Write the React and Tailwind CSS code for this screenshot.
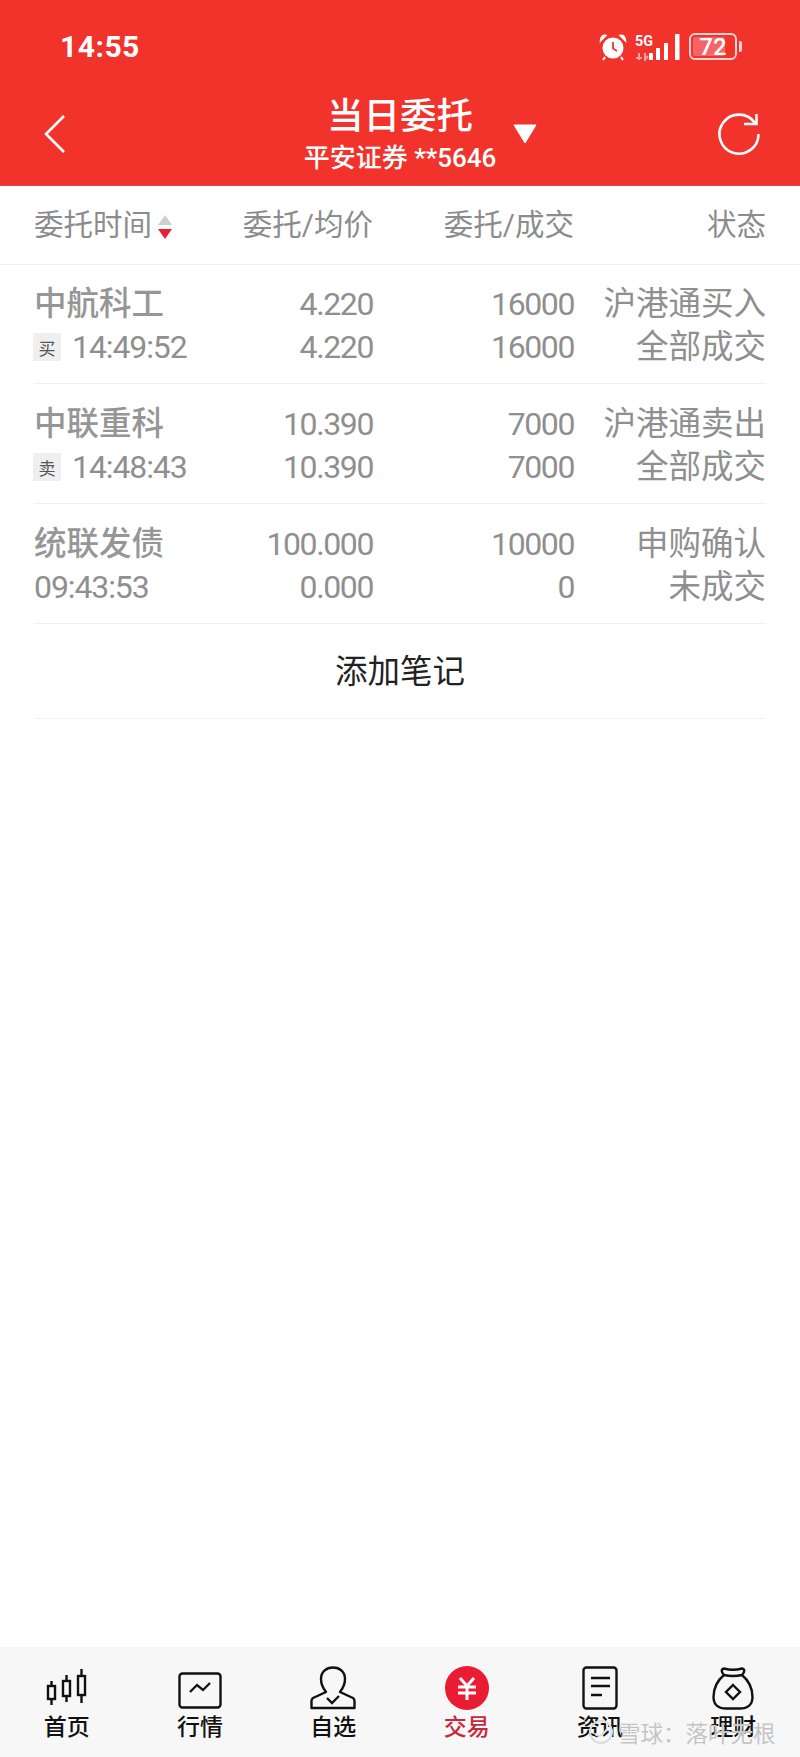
const cjk = { fontFamily: '"Noto Sans CJK SC", sans-serif' };
const num = { fontFamily: 'Roboto, "Noto Sans CJK SC", sans-serif' };

const orders = [
  { name: "中航科工", tag: "买", time: "14:49:52", p1: "4.220", p2: "4.220", q1: "16000", q2: "16000", s1: "沪港通买入", s2: "全部成交" },
  { name: "中联重科", tag: "卖", time: "14:48:43", p1: "10.390", p2: "10.390", q1: "7000", q2: "7000", s1: "沪港通卖出", s2: "全部成交" },
  { name: "统联发债", time: "09:43:53", p1: "100.000", p2: "0.000", q1: "10000", q2: "0", s1: "申购确认", s2: "未成交" },
];

function StatusIcons() {
  return (
    <div className="flex items-center gap-[9px] text-white">
      {/* alarm clock */}
      <svg width="28" height="28" viewBox="0 0 28 28" className="-mr-[1px]">
        <circle cx="14" cy="15" r="10.5" fill="#fff" />
        <path d="M1.5 8 L7 2.5 Q2 1.5 1.5 8Z M26.5 8 L21 2.5 Q26 1.5 26.5 8Z" fill="#fff" stroke="#fff" strokeWidth="1.5" />
        <path d="M14 9 V15.5 L18 18" fill="none" stroke="#f1332c" strokeWidth="1.8" />
        <path d="M6 24 L4 27 M22 24 L24 27" stroke="#fff" strokeWidth="2" />
      </svg>
      {/* mobile signal */}
      <svg width="45" height="28" viewBox="0 0 45 28">
        <text x="0" y="13" fill="#fff" fontSize="15" fontWeight="700" fontFamily="Roboto, sans-serif" textLength="18" lengthAdjust="spacingAndGlyphs">5G</text>
        <path d="M4 20 V27 M1 25 H7" stroke="#f7a09b" strokeWidth="2" />
        <path d="M10 20 V27 L13 23" fill="none" stroke="#f7a09b" strokeWidth="2" />
        <rect x="14" y="20" width="4" height="7" fill="#fff" />
        <rect x="21" y="15" width="4" height="12" fill="#fff" />
        <rect x="29" y="10" width="4" height="17" fill="#fff" />
        <rect x="40" y="1" width="4.500" height="26" fill="#fff" />
      </svg>
      {/* battery */}
      <div className="flex items-center gap-[2px]">
        <div className="relative w-[48px] h-[27px] rounded-[6px] border-2 border-[#fbd3d0] flex items-center justify-center">
          <div className="absolute left-[2px] top-[2px] bottom-[2px] w-[32px] rounded-[2px] bg-[#f4656a]" />
          <span className="relative text-[24px] leading-none font-medium text-white" style={num}>72</span>
        </div>
        <div className="w-[3px] h-[11px] rounded-r-[2px] bg-[#fbd3d0]" />
      </div>
    </div>
  );
}

function Header() {
  return (
    <header className="h-[186px] bg-[#f1332c] border-b border-[#d8474a] text-white flex flex-col shrink-0">
      <div className="h-[92px] pl-[60px] pr-[58px] flex items-center justify-between pt-[1px]">
        <span className="text-[30px] font-bold tracking-[0.5px] leading-none" style={num}>14:55</span>
        <StatusIcons />
      </div>
      <div className="relative flex-1 flex items-start justify-between pl-[43px] pr-[39px]">
        <svg width="24" height="40" viewBox="0 0 24 40" className="mt-[22px]">
          <path d="M21 2 L3 20 L21 38" fill="none" stroke="#fff" strokeWidth="2.600" />
        </svg>
        <div className="absolute left-0 right-0 top-0 flex flex-col items-center">
          <span className="text-[36.5px] leading-[44px] font-medium" style={cjk}>当日委托</span>
          <span className="text-[26px] leading-[30px] font-medium mt-[7px]" style={num}>平安证券 **5646</span>
        </div>
        <svg width="24" height="20" viewBox="0 0 24 20" className="absolute left-[513px] top-[32px]">
          <path d="M1 1 H23 L12 19Z" fill="#fff" stroke="#fff" strokeLinejoin="round" />
        </svg>
        <svg width="44" height="44" viewBox="0 0 44 44" className="mt-[20px]">
          <path d="M38 11 A19.500 19.500 0 1 0 41.500 22" fill="none" stroke="#fff" strokeWidth="2.600" />
          <path d="M27 12 H39.500 V2" fill="none" stroke="#fff" strokeWidth="2.600" />
        </svg>
      </div>
    </header>
  );
}

function SortArrows() {
  return (
    <svg width="16" height="26" viewBox="0 0 16 26" className="ml-[5px] mt-[1px]">
      <path d="M8 1 L15 11 H1Z" fill="#cfcfcf" />
      <path d="M1 15 H15 L8 25Z" fill="#e8202f" />
    </svg>
  );
}

function HeadRow() {
  return (
    <div className="h-[79px] border-b border-[#f1f1f1] pt-[2px] px-[34px] grid grid-cols-[200px_139px_201px_192px] items-center text-[29.5px] leading-none text-[#8c8c8c]" style={num}>
      <div className="flex items-center">委托时间<SortArrows /></div>
      <div className="text-right">委托/均价</div>
      <div className="text-right">委托/成交</div>
      <div className="text-right">状态</div>
    </div>
  );
}

function OrderRow({ o }) {
  const figures = "flex flex-col items-end text-[32px] tracking-[-1.4px] leading-none";
  return (
    <div className="mx-[34px] h-[120px] border-b border-[#f1f1f1] pt-[18px] grid grid-cols-[200px_139px_201px_192px] text-[#8f8f8f]" style={num}>
      <div className="flex flex-col">
        <div className="h-[44px] flex items-center text-[32.5px] leading-none font-medium text-[#969696]">{o.name}</div>
        <div className="h-[42px] flex items-center text-[32px] tracking-[-1.1px] leading-none whitespace-nowrap">
          {o.tag && (
            <span className="w-[28px] h-[28px] mr-[11px] -ml-[1px] bg-[#efefef] text-[#555] text-[17px] tracking-normal flex items-center justify-center" style={cjk}>{o.tag}</span>
          )}
          {o.time}
        </div>
      </div>
      <div className={figures}>
        <div className="h-[44px] flex items-center">{o.p1}</div>
        <div className="h-[42px] flex items-center">{o.p2}</div>
      </div>
      <div className={figures}>
        <div className="h-[44px] flex items-center">{o.q1}</div>
        <div className="h-[42px] flex items-center">{o.q2}</div>
      </div>
      <div className="flex flex-col items-end whitespace-nowrap text-[32.5px] leading-none">
        <div className="h-[44px] flex items-center">{o.s1}</div>
        <div className="h-[42px] flex items-center">{o.s2}</div>
      </div>
    </div>
  );
}

const I = { fill: "none", stroke: "#111", strokeWidth: 2.4 };

const tabs = [
  { label: "首页", icon: (
    <svg width="42" height="42" viewBox="0 0 42 42" {...I}>
      <rect x="2" y="18" width="7" height="13" /><path d="M5.500 13 V18 M5.500 31 V37" />
      <rect x="17" y="13" width="7" height="15" /><path d="M20.500 7 V13 M20.500 28 V34" />
      <rect x="32" y="8" width="7" height="19" /><path d="M35.500 1 V8 M35.500 27 V35" />
    </svg>
  ) },
  { label: "行情", icon: (
    <svg width="44" height="38" viewBox="0 0 44 38" {...I}>
      <rect x="1.500" y="1.500" width="41" height="34" rx="3" />
      <path d="M12 20 L19 13 L25 18 L32 11" />
    </svg>
  ) },
  { label: "自选", icon: (
    <svg width="46" height="44" viewBox="0 0 46 44" {...I}>
      <path d="M16 26 C12 21 11 17 11 13 C11 6 16 1.500 23 1.500 C30 1.500 35 6 35 13 C35 17 34 21 30 26 L43 32 Q44.500 33 44.500 35 V42 H1.500 V35 Q1.500 33 3 32Z" strokeLinejoin="round" />
      <path d="M17 32 L22 37 L29 30" />
    </svg>
  ) },
  { label: "交易", active: true, icon: (
    <svg width="44" height="44" viewBox="0 0 44 44">
      <circle cx="22" cy="22" r="22" fill="#ea1c34" />
      <path d="M15 12 L22 20 L29 12 M13 21 H31 M13 27 H31 M22 20 V34" fill="none" stroke="#fff" strokeWidth="3" />
    </svg>
  ) },
  { label: "资讯", icon: (
    <svg width="36" height="44" viewBox="0 0 36 44" {...I}>
      <rect x="1.500" y="1.500" width="33" height="41" rx="3" />
      <path d="M9 12 H28 M9 20 H28 M9 29 H20" />
    </svg>
  ) },
  { label: "理财", icon: (
    <svg width="42" height="44" viewBox="0 0 42 44" {...I}>
      <path d="M12 9 C9 6 9 3 12 2.500 Q21 5 30 2.500 C33 3 33 6 30 9 Q21 11 12 9Z" strokeLinejoin="round" />
      <path d="M12 9 C6 14 1.500 21 1.500 31 C1.500 39 7 42.500 14 42.500 H28 C35 42.500 40.500 39 40.500 31 C40.500 21 36 14 30 9" />
      <path d="M21 19 L28 26 L21 33 L14 26Z" />
    </svg>
  ) },
];

function TabBar() {
  return (
    <nav className="relative h-[110px] bg-[#f7f7f7] grid grid-cols-6 shrink-0">
      {tabs.map((t) => (
        <div key={t.label} className="flex flex-col items-center">
          <div className="h-[66px] flex items-end pb-[3px]">{t.icon}</div>
          <span className={`-mt-[3px] text-[23px] leading-[30px] font-medium ${t.active ? "text-[#c8283a]" : "text-[#111]"}`} style={cjk}>{t.label}</span>
        </div>
      ))}
      {/* site watermark laid over the bar */}
      <div className="absolute left-[588px] top-[72px] flex items-center gap-[4px] whitespace-nowrap">
        <svg width="26" height="26" viewBox="0 0 26 26" fill="none" stroke="#dcdcdc" strokeWidth="2">
          <circle cx="13" cy="13" r="11" />
          <path d="M7 15 Q13 20 19 10" />
        </svg>
        <span className="text-[22.5px] leading-none text-[#c4c4c4] [text-shadow:0_0_1px_#ffffff]" style={cjk}>雪球：落叶无根</span>
      </div>
    </nav>
  );
}

export default function App() {
  return (
    <div className="w-[800px] h-[1757px] bg-white flex flex-col overflow-hidden" style={cjk}>
      <Header />
      <HeadRow />
      <main className="flex-1 -mt-[1px]">
        {orders.map((o) => <OrderRow key={o.name} o={o} />)}
        <div className="mx-[34px] h-[95px] pb-[4px] border-b border-[#f1f1f1] flex items-center justify-center text-[32.5px] text-[#222]">添加笔记</div>
      </main>
      <TabBar />
    </div>
  );
}
